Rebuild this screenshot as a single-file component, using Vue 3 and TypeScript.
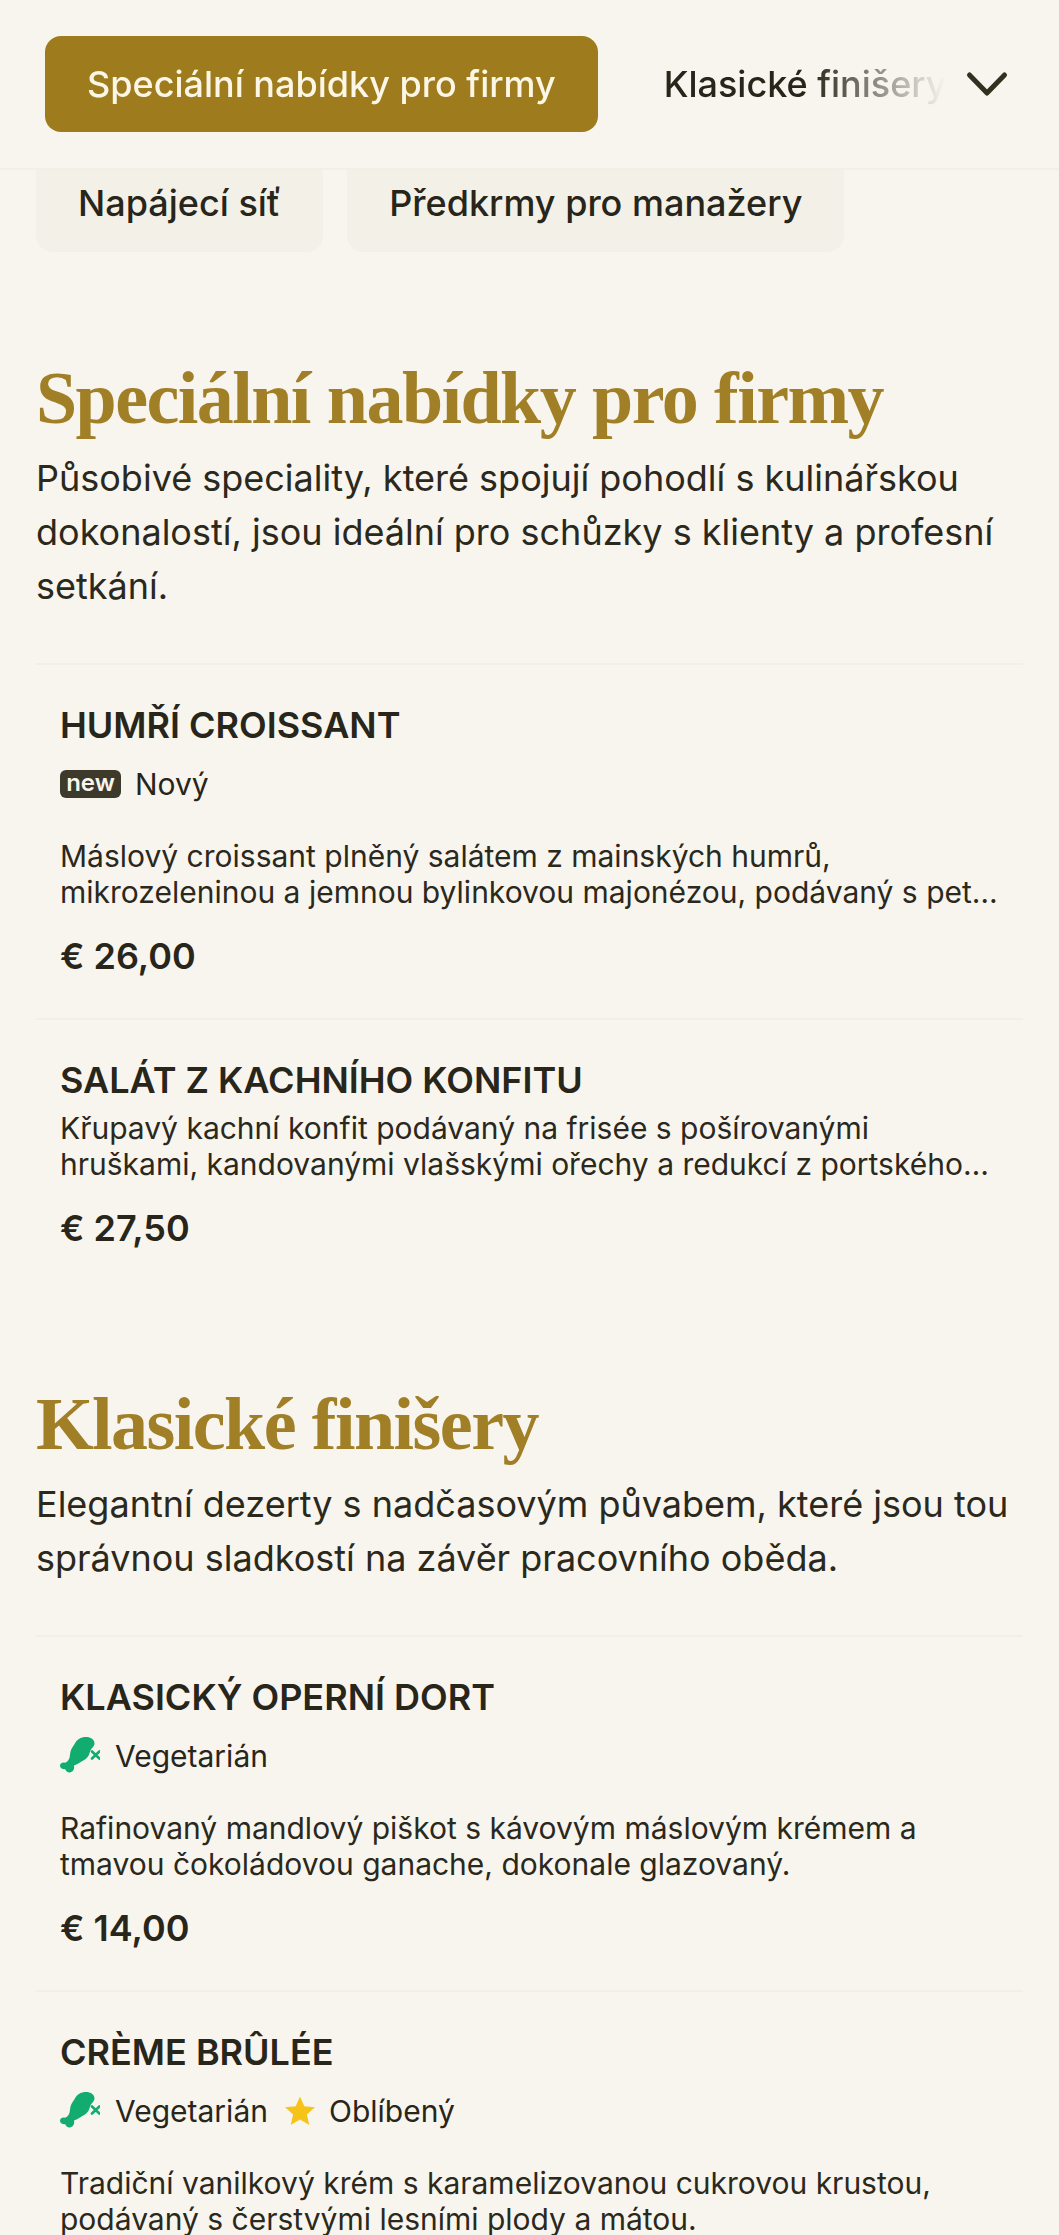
<script setup lang="ts">
interface Tag { kind: 'new' | 'veg' | 'fav'; label: string }
interface Item { name: string; tags: Tag[]; desc: string; price: string }
interface Section { title: string; intro: string; items: Item[] }

const sections: Section[] = [
  {
    title: 'Speciální nabídky pro firmy',
    intro: 'Působivé speciality, které spojují pohodlí s kulinářskou dokonalostí, jsou ideální pro schůzky s klienty a profesní setkání.',
    items: [
      {
        name: 'HUMŘÍ CROISSANT',
        tags: [{ kind: 'new', label: 'Nový' }],
        desc: 'Máslový croissant plněný salátem z mainských humrů, mikrozeleninou a jemnou bylinkovou majonézou, podávaný s pet…',
        price: '€ 26,00',
      },
      {
        name: 'SALÁT Z KACHNÍHO KONFITU',
        tags: [],
        desc: 'Křupavý kachní konfit podávaný na frisée s pošírovanými hruškami, kandovanými vlašskými ořechy a redukcí z portského…',
        price: '€ 27,50',
      },
    ],
  },
  {
    title: 'Klasické finišery',
    intro: 'Elegantní dezerty s nadčasovým půvabem, které jsou tou správnou sladkostí na závěr pracovního oběda.',
    items: [
      {
        name: 'KLASICKÝ OPERNÍ DORT',
        tags: [{ kind: 'veg', label: 'Vegetarián' }],
        desc: 'Rafinovaný mandlový piškot s kávovým máslovým krémem a tmavou čokoládovou ganache, dokonale glazovaný.',
        price: '€ 14,00',
      },
      {
        name: 'CRÈME BRÛLÉE',
        tags: [{ kind: 'veg', label: 'Vegetarián' }, { kind: 'fav', label: 'Oblíbený' }],
        desc: 'Tradiční vanilkový krém s karamelizovanou cukrovou krustou, podávaný s čerstvými lesními plody a mátou.',
        price: '',
      },
    ],
  },
]
</script>

<template>
  <div class="page">
    <header class="top">
      <nav class="scroller">
        <span class="tab active">Speciální nabídky pro firmy</span>
        <span class="tab">Klasické finišery</span>
      </nav>
      <svg class="chev" viewBox="0 0 44 26" width="44" height="26" aria-hidden="true">
        <path d="M4.500 4 L22 22 L39.500 4" fill="none" stroke="#34301f" stroke-width="5" stroke-linecap="round" stroke-linejoin="round" />
      </svg>
    </header>

    <div class="pills">
      <span class="pill">Napájecí síť</span>
      <span class="pill">Předkrmy pro manažery</span>
    </div>

    <main>
      <section v-for="s in sections" :key="s.title" class="section">
        <h2>{{ s.title }}</h2>
        <p class="intro">{{ s.intro }}</p>
        <article v-for="it in s.items" :key="it.name" class="item">
          <h3>{{ it.name }}</h3>
          <div v-if="it.tags.length" class="tags">
            <span v-for="t in it.tags" :key="t.label" class="tag">
              <span v-if="t.kind === 'new'" class="newbadge">new</span>
              <svg v-else-if="t.kind === 'veg'" class="ico" viewBox="0 0 40 40" width="40" height="40" aria-hidden="true">
                <path fill="#12ad6e" d="M15.500 6.500C17.500 3.200 21.500 1 25.500 1C30.500 .8 34.500 3.500 34.500 7.500C34.500 10.500 31.500 12 30.500 14.500C29.500 16.500 29.500 18.500 28 20.500C26 23.500 22.500 25 20 26.500C18 27.700 16 28.700 14 29.500C14.500 32 14 35.300 10.500 36.300C8 37 6 35.500 5.300 33.200C3 33.500 .3 32.500 0 30C-.2 27.500 2.500 26 5 26.800C6.500 26.200 8.200 25 9 23C10 21 9.800 18.500 10.500 15.500C11.200 12.500 13.800 9.500 15.500 6.500Z" />
                <path d="M32 15.500L39.400 22.500M39.400 15.500L32 22.500" stroke="#12ad6e" stroke-width="2.600" stroke-linecap="round" fill="none" />
              </svg>
              <svg v-else class="ico fav" viewBox="0 0 32 32" width="32" height="32" aria-hidden="true">
                <path fill="#f6c419" d="M16 1.500L20.300 11.300L31 12.300L22.900 19.400L25.300 29.900L16 24.400L6.700 29.900L9.100 19.400L1 12.300L11.700 11.300Z" />
              </svg>
              {{ t.label }}
            </span>
          </div>
          <p class="desc" :class="{ tagged: it.tags.length }">{{ it.desc }}</p>
          <div v-if="it.price" class="price">{{ it.price }}</div>
        </article>
      </section>
    </main>
  </div>
</template>

<style>
html, body { margin: 0; background: #f8f5ee; }
</style>

<style scoped>
.page {
  width: 1059px;
  height: 2235px;
  overflow: hidden;
  background: #f8f5ee;
  color: #28251a;
  font-family: Inter, "Liberation Sans", sans-serif;
}
.top {
  height: 170px;
  box-sizing: border-box;
  border-bottom: 2px solid #f2efe6;
  display: flex;
  align-items: flex-start;
  padding: 36px 50px 0 45px;
  gap: 20px;
}
.scroller {
  flex: 1;
  min-width: 0;
  display: flex;
  gap: 24px;
  overflow: hidden;
  white-space: nowrap;
  -webkit-mask-image: linear-gradient(to right, #000 85%, transparent 100%);
  mask-image: linear-gradient(to right, #000 85%, transparent 100%);
}
.tab {
  font-size: 36px;
  font-weight: 500;
  line-height: 96px;
  padding: 0 42px;
  border-radius: 16px;
  flex: none;
}
.active {
  background: #9e7c1d;
  color: #fbf6e6;
}
.chev { flex: none; margin-top: 35px; }
.pills {
  height: 82px;
  overflow: hidden;
  display: flex;
  gap: 24px;
  padding-left: 36px;
}
.pill {
  height: 104px;
  margin-top: -22px;
  line-height: 111px;
  padding: 0 42px;
  font-size: 36px;
  font-weight: 500;
  background: #f3f1e7;
  border-radius: 16px;
  box-sizing: border-box;
}
.section {
  margin: 0 36px;
  padding-top: 82px;
}
.section:first-child { padding-top: 94px; }
h2 {
  margin: 0;
  font-family: "Liberation Serif", serif;
  font-weight: 700;
  font-size: 74px;
  letter-spacing: -1.55px;
  line-height: 105px;
  color: #a17f26;
}
.intro {
  margin: 0 0 50px;
  font-size: 36px;
  line-height: 54px;
  color: #2b281c;
}
.item {
  border-top: 2px solid #f2efe6;
  padding: 38px 24px 40px;
}
h3 {
  margin: 0;
  font-size: 36px;
  line-height: 44px;
  font-weight: 600;
}
.tags {
  display: flex;
  align-items: center;
  gap: 16px;
  margin-top: 15px;
  height: 44px;
  margin-bottom: 32px;
}
.tag {
  display: flex;
  align-items: center;
  gap: 15px;
  font-size: 30px;
  line-height: 40px;
}
.fav { margin-right: -2px; }
.newbadge {
  background: #3d3a2c;
  color: #f8f5ee;
  font-size: 24px;
  font-weight: 600;
  line-height: 26px;
  width: 61px;
  height: 28px;
  border-radius: 6px;
  text-align: center;
  margin-right: -1px;
}
.desc {
  margin: 8px 0 0;
  font-size: 30px;
  line-height: 36px;
  color: #2b281c;
}
.desc.tagged { margin-top: 0; }
.price {
  margin-top: 24px;
  font-size: 36px;
  line-height: 44px;
  font-weight: 600;
}
</style>
